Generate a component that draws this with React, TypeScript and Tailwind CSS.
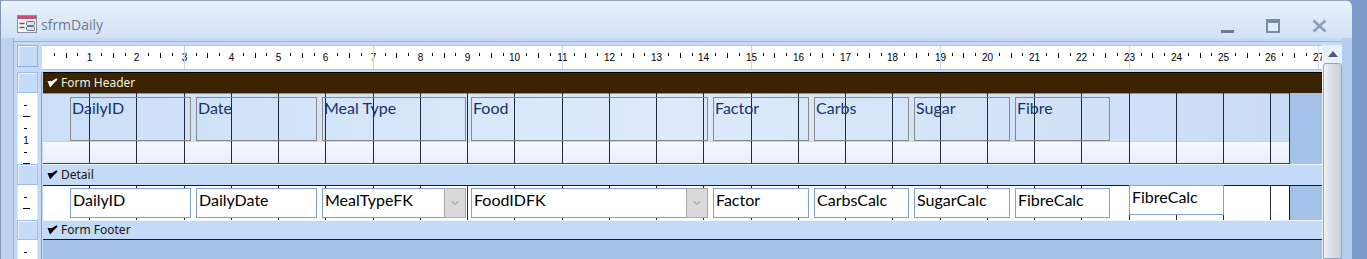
import { ChevronDown } from "lucide-react"

// 1 cm on the design grid = 47.25px (120 dpi)
const CM = 47.25
const cm = (k: number) => Math.round(k * CM - 0.01)

type Ctl = { text: string; w: string; ml: string; combo?: boolean }

const labels: Ctl[] = [
  { text: "DailyID", w: "w-[121px]", ml: "ml-[27px]" },
  { text: "Date", w: "w-[121px]", ml: "ml-[5px]" },
  { text: "Meal Type", w: "w-[144px]", ml: "ml-[5px]" },
  { text: "Food", w: "w-[237px]", ml: "ml-[5px]" },
  { text: "Factor", w: "w-[96px]", ml: "ml-[5px]" },
  { text: "Carbs", w: "w-[95px]", ml: "ml-[5px]" },
  { text: "Sugar", w: "w-[96px]", ml: "ml-[5px]" },
  { text: "Fibre", w: "w-[95px]", ml: "ml-[5px]" },
]

const fields: Ctl[] = [
  { text: "DailyID", w: "w-[121px]", ml: "ml-[27px]" },
  { text: "DailyDate", w: "w-[121px]", ml: "ml-[5px]" },
  { text: "MealTypeFK", w: "w-[144px]", ml: "ml-[5px]", combo: true },
  { text: "FoodIDFK", w: "w-[237px]", ml: "ml-[5px]", combo: true },
  { text: "Factor", w: "w-[96px]", ml: "ml-[5px]" },
  { text: "CarbsCalc", w: "w-[95px]", ml: "ml-[5px]" },
  { text: "SugarCalc", w: "w-[96px]", ml: "ml-[5px]" },
  { text: "FibreCalc", w: "w-[95px]", ml: "ml-[5px]" },
]

function FormIcon() {
  return (
    <svg width="20" height="18" viewBox="0 0 20 18">
      <rect x="0.5" y="0.5" width="19" height="17" fill="#f3f4f7" stroke="#8b8ea0" />
      <rect x="1" y="1" width="18" height="3" fill="#c94f74" />
      <line x1="2.5" y1="8.5" x2="7.5" y2="8.5" stroke="#5a6070" strokeWidth="1.3" />
      <line x1="2.5" y1="12.5" x2="7.5" y2="12.5" stroke="#5a6070" strokeWidth="1.3" />
      <rect x="9.5" y="6.5" width="8" height="4" rx="1" fill="#dde2ea" stroke="#6b7384" />
      <rect x="9.5" y="11.5" width="8" height="4" rx="1" fill="#dde2ea" stroke="#6b7384" />
    </svg>
  )
}

function HRuler() {
  const items = []
  for (let q = 1; q < 27 * 4 + 4; q++) {
    const x = cm(q / 4) + 0.5
    if (x > 1279) break
    if (q % 4 === 0) {
      items.push(
        <text key={q} x={x} y={15} textAnchor="middle" fontSize="10" fontFamily="Liberation Sans, Arial, sans-serif" fill="#000">
          {q / 4}
        </text>
      )
    } else {
      items.push(<line key={q} x1={x} x2={x} y1={7} y2={q % 4 === 2 ? 12 : 10} stroke="#000" />)
    }
  }
  // faint guide lines every 4cm
  for (let k = 3; k <= 27; k += 4) {
    const x = cm(k) + 0.5
    items.push(<line key={"g" + k} x1={x} x2={x} y1={0} y2={23} stroke="#c3d7f3" />)
  }
  return (
    <svg width="1280" height="23" className="block">
      {items}
    </svg>
  )
}

function VRule({ h, marks }: { h: number; marks: Array<[number, string]> }) {
  return (
    <div className="w-[21px] h-full bg-white border-x border-[#d7e6fa]">
      <svg width="19" height={h} className="block">
        {marks.map(([y, m]) =>
          m === "s" ? (
            <line key={y} x1={6} x2={9} y1={y + 0.5} y2={y + 0.5} stroke="#000" />
          ) : m === "l" ? (
            <line key={y} x1={5} x2={12} y1={y + 0.5} y2={y + 0.5} stroke="#000" />
          ) : (
            <text key={y} x={8} y={y + 4} textAnchor="middle" fontSize="10" fontFamily="Liberation Sans, Arial, sans-serif">
              {m}
            </text>
          )
        )}
      </svg>
    </div>
  )
}

function RuleBox() {
  return <div className="w-[21px] h-full bg-[#c5dbf8] border border-[#9cbde8] shadow-[inset_1px_1px_0_#eef5fe]" />
}

function Row({ h, rule, children }: { h: string; rule: React.ReactNode; children: React.ReactNode }) {
  return (
    <div className={`flex ${h}`}>
      <div className="pl-[3px] h-full">{rule}</div>
      <div className="w-[5px] flex justify-end pr-px">
        <div className="w-px bg-[#7ea3da]" />
      </div>
      <div className="w-[1279px] h-full">{children}</div>
    </div>
  )
}

function GridLines({ color }: { color: string }) {
  const lines = []
  for (let k = 1; k <= 26; k++) {
    const x = cm(k) - 1 + 0.5
    lines.push(<line key={k} x1={x} x2={x} y1={0} y2="100%" stroke={color} />)
  }
  return (
    <svg className="absolute inset-0 h-full w-full" aria-hidden>
      {lines}
    </svg>
  )
}

// section selector glyph: down-pointing wedge with a tail to the upper right
function SectionGlyph({ color }: { color: string }) {
  return (
    <svg width="11" height="10" viewBox="0 0 11 10">
      <path d="M0.5 3 L5 3 L9.5 0.3 L10.5 1.8 L7.5 4.5 L3 9.5 Z" fill={color} />
    </svg>
  )
}

function SectionBar({ title, selected, last }: { title: string; selected?: boolean; last?: boolean }) {
  return (
    <div
      className={
        selected
          ? "h-full flex items-center pl-[4px] gap-[3px] bg-[#3c2300] border-t border-[#000]"
          : `h-full flex items-center pl-[4px] gap-[3px] bg-[#c3dbf9] border-t border-[#eef5fe] ${last ? "border-b border-b-[#1a1a1a]" : ""}`
      }
    >
      <SectionGlyph color={selected ? "#ffffff" : "#000000"} />
      <span
        className={`font-['Noto_Sans',sans-serif] text-[12px] leading-4 ${selected ? "text-[#e8f4e4]" : "text-[#1e1408]"}`}
      >
        {title}
      </span>
    </div>
  )
}

export default function App() {
  return (
    <div className="w-[1367px] h-[259px] overflow-hidden bg-[#7b9bcb] flex">
      <div className="w-[1352px] h-full flex flex-col rounded-tr-[7px] rounded-tl-[3px] overflow-hidden border-l border-[#8496b0]">
        {/* Title bar */}
        <div className="h-[38px] shrink-0 flex items-start bg-gradient-to-b from-[#eaf1fb] via-[#dde9f8] to-[#d2e2f6] border-t border-[#97a7bd]">
          <div className="ml-[16px] mt-[14px]">
            <FormIcon />
          </div>
          <span className="ml-[4px] mt-[14px] font-['Open_Sans',sans-serif] text-[14px] leading-[20px] text-[#6f7b8c]">
            sfrmDaily
          </span>
          <div className="ml-auto flex items-start mr-[25px]">
            <div className="w-[13px] h-[3px] mt-[29px] bg-[#6c7a8f]" />
            <div className="ml-[32px] mt-[18px] w-[14px] h-[14px] border-2 border-t-4 border-[#7b8ca5] bg-[#e3edf9]" />
            <svg className="ml-[32px] mt-[18px]" width="15" height="14" viewBox="0 0 15 14">
              <path d="M1.5 1.5 L13.5 12.5 M13.5 1.5 L1.5 12.5" stroke="#8c9db6" strokeWidth="2.6" />
            </svg>
          </div>
        </div>

        {/* Body */}
        <div className="flex-1 flex min-h-0">
          <div className="w-[13px] bg-[#bcd2f0] border-r border-[#91b1dd]" />
          <div className="w-[1328px] flex flex-col bg-[#c6daf5]">
            <div className="h-[3px]" />
            <div className="h-px bg-[#93b5e3]" />
            <div className="h-[3px]" />
            <div className="flex flex-1 min-h-0">
              {/* design surface */}
              <div className="w-[1308px] flex flex-col">
                {/* horizontal ruler */}
                <div className="flex h-[25px]">
                  <div className="ml-[3px] w-[21px] h-[22px] bg-[#c5dbf8] border border-[#8db3e6] shadow-[inset_1px_1px_0_#eef5fe]" />
                  <div className="ml-[4px] w-[1280px] h-[25px] bg-white border-y border-[#a6c6ee]">
                    <HRuler />
                  </div>
                </div>
                <div className="h-[2px]" />

                {/* Form Header bar */}
                <Row h="h-[21px]" rule={<RuleBox />}>
                  <SectionBar title="Form Header" selected />
                </Row>

                {/* Form Header section */}
                <Row
                  h="h-[71px]"
                  rule={<VRule h={71} marks={[[12, "s"], [23, "l"], [35, "s"], [47, "1"], [59, "s"], [70, "l"]]} />}
                >
                  <div className="flex h-full">
                    <div className="relative w-[1247px] h-full flex flex-col border-r border-[#1f2b3a] border-b border-b-[#3a4656]">
                      <GridLines color="#1f2b3a" />
                      <div className="h-[48px] border-t border-[#7d95b5] bg-gradient-to-r from-[#cbdff8] via-[#deeafb] to-[#c9dcf6] pt-[3px]">
                        <div className="relative flex">
                          {labels.map((l) => (
                            <div
                              key={l.text}
                              className={`${l.w} ${l.ml} h-[44px] border border-[#8a8a8a] pl-px font-['Lato',sans-serif] text-[16px] leading-[20px] text-[#14336e]`}
                            >
                              {l.text}
                            </div>
                          ))}
                        </div>
                      </div>
                      <div className="flex-1 border-t border-[#c9d2de] bg-gradient-to-b from-[#f5f8fc] to-[#e7f0fc]" />
                    </div>
                    <div className="flex-1 bg-[#a4c2e8]" />
                  </div>
                </Row>

                {/* Detail bar */}
                <Row h="h-[21px]" rule={<RuleBox />}>
                  <SectionBar title="Detail" />
                </Row>

                {/* Detail section */}
                <Row h="h-[35px]" rule={<VRule h={35} marks={[[12, "s"], [23, "l"]]} />}>
                  <div className="flex h-full border-t border-[#1a1a1a]">
                    <div className="relative w-[1247px] h-full bg-white border-r border-[#1a1a1a] pt-[2px]">
                      <GridLines color="#2a2a2a" />
                      <div className="relative flex items-start">
                        {fields.map((f) => (
                          <div
                            key={f.text}
                            className={`${f.w} ${f.ml} h-[30px] flex bg-white border border-[#7f9fd6] font-['Lato',sans-serif] text-[16px] leading-[20px] text-black`}
                          >
                            <span className="pl-[2px] pt-px">{f.text}</span>
                            {f.combo && (
                              <div className="ml-auto -mr-px -my-px w-[22px] flex items-center justify-center bg-[#d9d9d9] border border-[#ababab]">
                                <ChevronDown size={12} strokeWidth={1.4} color="#666" />
                              </div>
                            )}
                          </div>
                        ))}
                        <div className="ml-[19px] -mt-[3px] w-[95px] h-[30px] bg-white border border-[#7f9fd6] font-['Lato',sans-serif] text-[16px] leading-[20px] text-black">
                          <span className="block pl-[2px] pt-px">FibreCalc</span>
                        </div>
                      </div>
                    </div>
                    <div className="flex-1 bg-[#a4c2e8]" />
                  </div>
                </Row>

                {/* Form Footer bar */}
                <Row h="h-[20px]" rule={<RuleBox />}>
                  <SectionBar title="Form Footer" last />
                </Row>

                {/* Form Footer section */}
                <Row h="h-[19px]" rule={<VRule h={19} marks={[[12, "s"]]} />}>
                  <div className="h-full bg-[#a4c2e8]" />
                </Row>
              </div>

              {/* vertical scrollbar */}
              <div className="w-[20px] flex flex-col bg-[#e9eff8] border-l border-[#f4f8fd]">
                <div className="h-[18px] flex items-center justify-center">
                  <div className="w-0 h-0 border-x-[5px] border-x-transparent border-b-[6px] border-b-[#4a5a74]" />
                </div>
                <div className="flex-1 rounded-t-[3px] border border-[#98a4b6] bg-gradient-to-r from-[#eef1f5] via-[#d8dee7] to-[#c8d0dc]" />
              </div>
            </div>
          </div>
          <div className="w-[10px] bg-[#b6ceee]" />
        </div>
      </div>
    </div>
  )
}
